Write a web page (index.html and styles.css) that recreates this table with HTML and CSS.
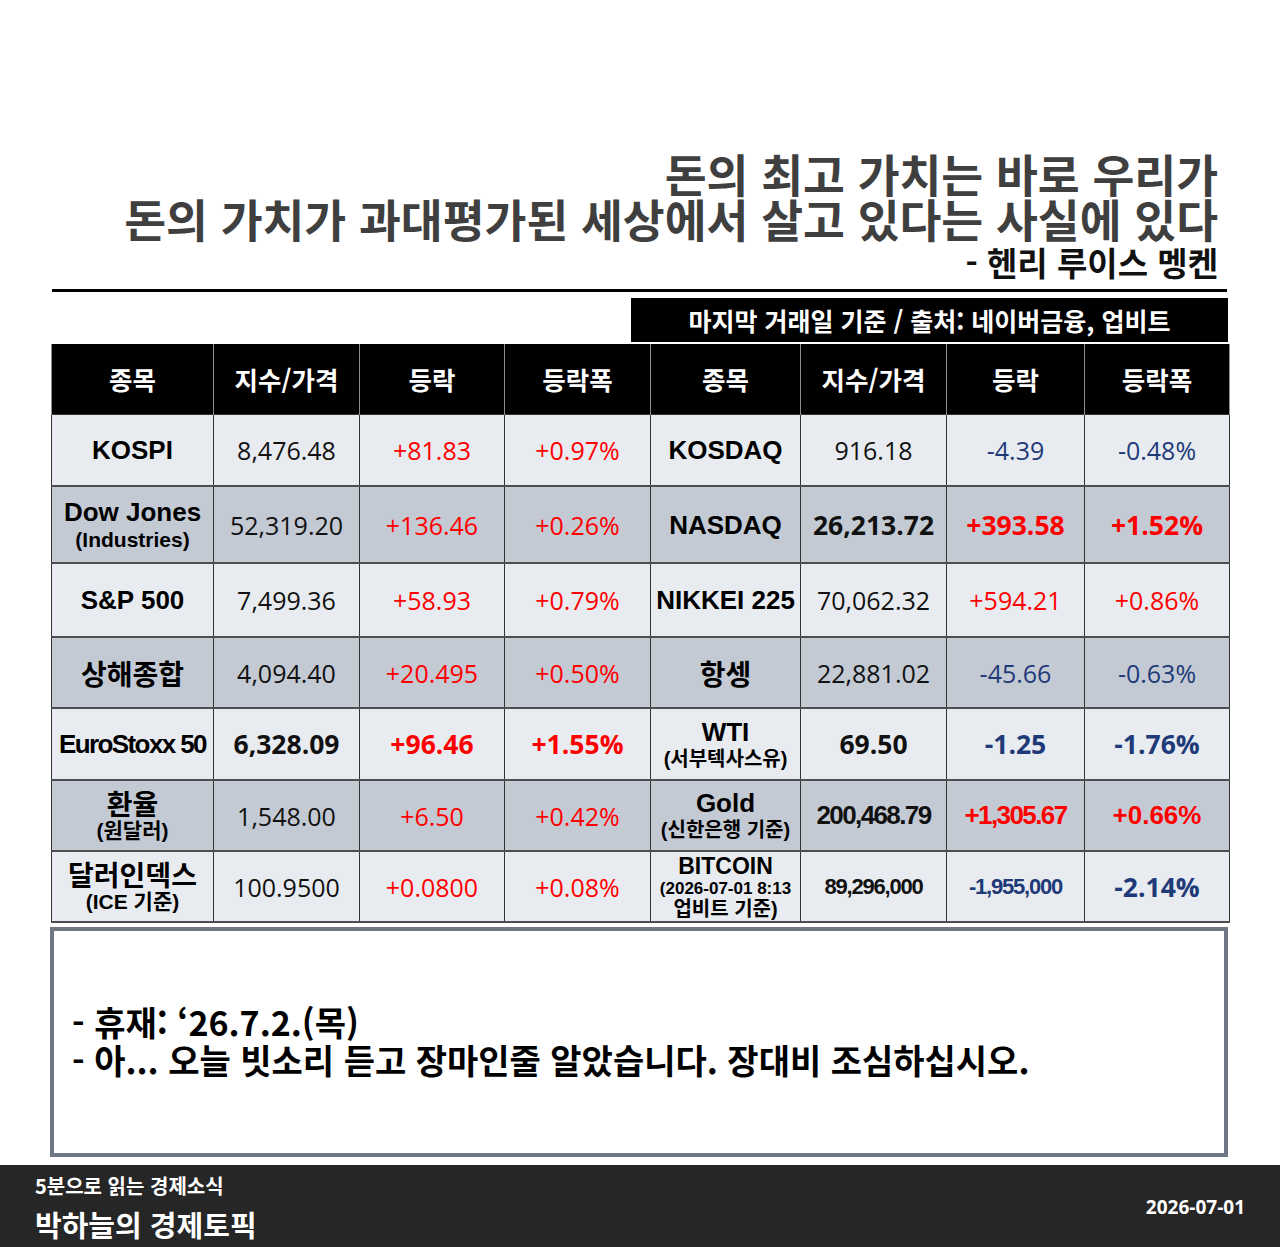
FILE: index.html
```html
<!DOCTYPE html>
<html lang="ko">
<head>
<meta charset="utf-8">
<title>경제토픽</title>
<link rel="stylesheet" href="styles.css">
</head>
<body>
<div class="page">
  <div class="quote">
    <div class="q1">돈의 최고 가치는 바로 우리가</div>
    <div class="q1">돈의 가치가 과대평가된 세상에서 살고 있다는 사실에 있다</div>
    <div class="q2">- 헨리 루이스 멩켄</div>
  </div>
  <div class="rule"></div>
  <div class="source">마지막 거래일 기준 / 출처: 네이버금융, 업비트</div>
  <table class="market">
    <colgroup>
      <col class="c1"><col class="c2"><col class="c3"><col class="c4">
      <col class="c5"><col class="c6"><col class="c7"><col class="c8">
    </colgroup>
    <thead>
      <tr class="hd">
        <th>종목</th><th>지수/가격</th><th>등락</th><th>등락폭</th>
        <th>종목</th><th>지수/가격</th><th>등락</th><th>등락폭</th>
      </tr>
    </thead>
    <tbody>
      <tr class="light r1">
        <td class="name">KOSPI</td><td class="num">8,476.48</td><td class="num up">+81.83</td><td class="num up">+0.97%</td>
        <td class="name">KOSDAQ</td><td class="num">916.18</td><td class="num down">-4.39</td><td class="num down">-0.48%</td>
      </tr>
      <tr class="dark r2">
        <td class="name"><span class="main">Dow Jones</span><span class="sub">(Industries)</span></td><td class="num">52,319.20</td><td class="num up">+136.46</td><td class="num up">+0.26%</td>
        <td class="name">NASDAQ</td><td class="num bold">26,213.72</td><td class="num bold up">+393.58</td><td class="num bold up">+1.52%</td>
      </tr>
      <tr class="light r3">
        <td class="name">S&amp;P 500</td><td class="num">7,499.36</td><td class="num up">+58.93</td><td class="num up">+0.79%</td>
        <td class="name">NIKKEI 225</td><td class="num">70,062.32</td><td class="num up">+594.21</td><td class="num up">+0.86%</td>
      </tr>
      <tr class="dark r4">
        <td class="name kr">상해종합</td><td class="num">4,094.40</td><td class="num up">+20.495</td><td class="num up">+0.50%</td>
        <td class="name kr">항셍</td><td class="num">22,881.02</td><td class="num down">-45.66</td><td class="num down">-0.63%</td>
      </tr>
      <tr class="light r5">
        <td class="name euro">EuroStoxx 50</td><td class="num bold">6,328.09</td><td class="num bold up">+96.46</td><td class="num bold up">+1.55%</td>
        <td class="name"><span class="main">WTI</span><span class="sub ks">(서부텍사스유)</span></td><td class="num bold">69.50</td><td class="num bold down">-1.25</td><td class="num bold down">-1.76%</td>
      </tr>
      <tr class="dark r6">
        <td class="name"><span class="main kr">환율</span><span class="sub">(원달러)</span></td><td class="num">1,548.00</td><td class="num up">+6.50</td><td class="num up">+0.42%</td>
        <td class="name"><span class="main">Gold</span><span class="sub ks">(신한은행 기준)</span></td><td class="num cond">200,468.79</td><td class="num cond up">+1,305.67</td><td class="num arialb up">+0.66%</td>
      </tr>
      <tr class="light r7">
        <td class="name"><span class="main kr">달러인덱스</span><span class="sub">(ICE 기준)</span></td><td class="num">100.9500</td><td class="num up">+0.0800</td><td class="num up">+0.08%</td>
        <td class="name btc"><span class="main">BITCOIN</span><span class="sub small">(2026-07-01 8:13</span><span class="sub ks">업비트 기준)</span></td><td class="num cond sm">89,296,000</td><td class="num cond sm down">-1,955,000</td><td class="num bold down">-2.14%</td>
      </tr>
    </tbody>
  </table>
  <div class="note">
    <p>- 휴재: ‘26.7.2.(목)</p>
    <p>- 아... 오늘 빗소리 듣고 장마인줄 알았습니다. 장대비 조심하십시오.</p>
  </div>
</div>
<footer class="footer">
  <div class="brand">
    <div class="tag">5분으로 읽는 경제소식</div>
    <div class="title">박하늘의 경제토픽</div>
  </div>
  <div class="date">2026-07-01</div>
</footer>
</body>
</html>
```

FILE: styles.css
```css
* { box-sizing: border-box; }
html, body { margin: 0; padding: 0; background: #ffffff; }
body { font-family: "Noto Sans CJK KR", "Noto Sans", sans-serif; color: #000; width: 1280px; }

.page { padding-top: 151px; }

.quote { text-align: right; padding-right: 62px; font-weight: 700; }
.q1 { font-size: 45.5px; line-height: 45px; color: #3f3f3f; white-space: nowrap; }
.q2 { font-size: 33px; line-height: 42px; color: #111; }

.rule { margin: 6px 0 0 52px; width: 1175px; height: 3px; background: #000; }

.source {
  margin: 6px 0 0 631px;
  width: 597px;
  height: 44px;
  background: #000;
  color: #fff;
  font-weight: 700;
  font-size: 25px;
  line-height: 44px;
  text-align: center;
}

.market {
  margin: 2px 0 0 51px;
  width: 1178px;
  border-collapse: collapse;
  table-layout: fixed;
}
.c1 { width: 162px; } .c2 { width: 146px; } .c3 { width: 145px; } .c4 { width: 146px; }
.c5 { width: 150px; } .c6 { width: 146px; } .c7 { width: 138px; } .c8 { width: 145px; }

.hd { height: 70px; }
.hd th {
  background: #000;
  color: #fff;
  font-size: 25.5px;
  font-weight: 700;
  border-left: 1px solid #8c8c8c;
  border-right: 1px solid #8c8c8c;
  padding: 0;
}

.market td {
  border: 1px solid #333;
  border-bottom: 2px solid #4d4d4d;
  text-align: center;
  vertical-align: middle;
  padding: 0;
  white-space: nowrap;
}
.light td { background: #e8ecf0; }
.dark td { background: #c3cad4; }
.r1 { height: 72px; } .r2 { height: 77px; } .r3 { height: 74px; } .r4 { height: 71px; }
.r5 { height: 72px; } .r6 { height: 71px; } .r7 { height: 71px; }

.name {
  font-family: "Liberation Sans", "Noto Sans CJK KR", sans-serif;
  font-weight: 700;
  font-size: 26px;
  line-height: 30px;
}
.name.kr, .main.kr { font-family: "Noto Sans CJK KR", sans-serif; font-size: 28px; }
.name .main { display: block; line-height: 30px; }
.name .sub { display: block; font-size: 21px; line-height: 25px; font-family: "Liberation Sans", "Noto Sans CJK KR", sans-serif; }
.name .sub.ks { font-size: 20px; }
.name.euro { letter-spacing: -1.6px; }
.btc .main { font-size: 23px; line-height: 24px; }
.btc .sub { line-height: 21px; }
.btc .sub.small { font-size: 17px; }

.num {
  font-family: "Open Sans", "Liberation Sans", sans-serif;
  font-size: 25px;
  color: #111;
}
.num.bold { font-weight: 700; font-size: 26.5px; }
.num.cond {
  font-family: "Liberation Sans", sans-serif;
  font-weight: 700;
  font-size: 26px;
  letter-spacing: -1.6px;
}
.num.cond.sm { font-size: 22px; letter-spacing: -1.2px; }
.num.arialb { font-family: "Liberation Sans", sans-serif; font-weight: 700; font-size: 26px; }
.num.up { color: #ff0000; }
.num.down { color: #1f3a78; }

.note {
  margin: 4px 0 0 50px;
  width: 1178px;
  height: 230px;
  border: 4px solid #6f7785;
  padding: 72px 0 0 18px;
}
.note p {
  margin: 0;
  font-size: 34px;
  line-height: 38px;
  font-weight: 700;
  color: #000;
}

.footer {
  margin-top: 8px;
  height: 83px;
  background: #262626;
  color: #fff;
  display: flex;
  justify-content: space-between;
  align-items: center;
  padding: 0 35px;
}
.brand { align-self: flex-start; padding-top: 8px; font-weight: 700; }
.tag { font-size: 20px; line-height: 26px; }
.title { font-size: 29px; line-height: 38px; margin-top: 6px; }
.date { font-family: "Open Sans", sans-serif; font-weight: 700; font-size: 19px; }
```
